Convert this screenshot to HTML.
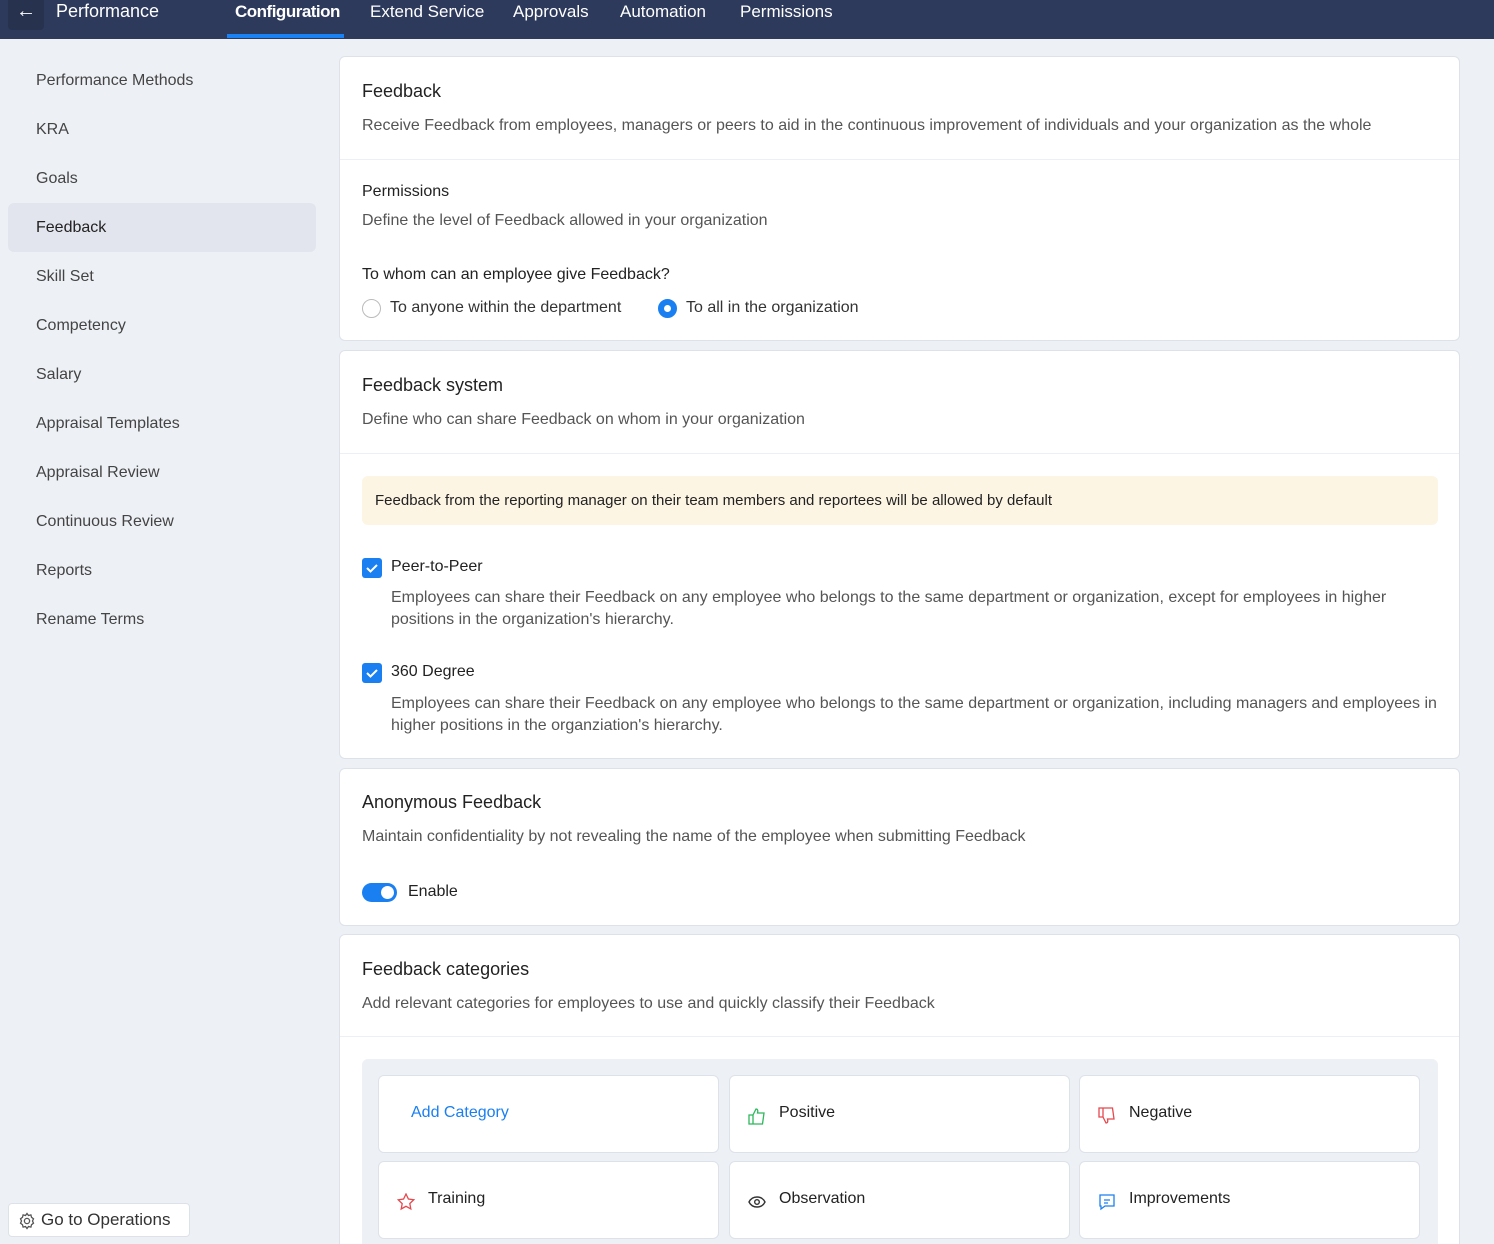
<!DOCTYPE html>
<html><head><meta charset="utf-8"><style>
*{box-sizing:border-box;margin:0;padding:0}
html{height:1244px;overflow:hidden}
body{width:1494px;height:1244px;overflow:hidden;background:#edf0f5;font-family:"Liberation Sans",sans-serif;color:#222;position:relative}
.top{position:absolute;left:0;top:0;width:1494px;height:39px;background:#2d3a5c;color:#fff}
.top .back{position:absolute;left:8px;top:-4px;width:36px;height:34px;background:#27324f;border-radius:4px;text-align:center;font-size:20px;line-height:30px}
.top span{position:absolute;top:2px;font-size:17px}
.side{position:absolute;left:8px;top:0}
.si{position:absolute;left:0;width:308px;height:49px;line-height:49px;padding-left:28px;font-size:16px;color:#444;border-radius:6px;white-space:nowrap}
.si.act{background:#e3e5ee;color:#222}
.card{position:absolute;left:339px;width:1121px;background:#fff;border:1px solid #dde2ea;border-radius:6px}
.abs{position:absolute;white-space:nowrap}
.h{font-size:18px;color:#222}
.d{font-size:16px;color:#555}
.hr{position:absolute;left:0;right:0;height:1px;background:#eceff3}
.cb{position:absolute;width:20px;height:20px;background:#1a7ff0;border-radius:3px}
.cat{position:absolute;width:341px;height:78px;background:#fff;border:1px solid #dde2ea;border-radius:6px;font-size:16px}
.cat .t{position:absolute;left:49px;top:28px}
.cat svg{position:absolute;left:18px;top:31px}
</style></head><body>
<div class="top">
<div class="back">←</div>
<span style="left:56px;font-size:18px;top:1px">Performance</span>
<span style="left:235px;font-weight:bold;letter-spacing:-0.5px">Configuration</span>
<div style="position:absolute;left:227px;top:34px;width:117px;height:4px;background:#1a82f5"></div>
<span style="left:370px">Extend Service</span>
<span style="left:513px">Approvals</span>
<span style="left:620px">Automation</span>
<span style="left:740px">Permissions</span>
</div>
<div class="side">
<div class="si" style="top:56px">Performance Methods</div>
<div class="si" style="top:105px">KRA</div>
<div class="si" style="top:154px">Goals</div>
<div class="si act" style="top:203px">Feedback</div>
<div class="si" style="top:252px">Skill Set</div>
<div class="si" style="top:301px">Competency</div>
<div class="si" style="top:350px">Salary</div>
<div class="si" style="top:399px">Appraisal Templates</div>
<div class="si" style="top:448px">Appraisal Review</div>
<div class="si" style="top:497px">Continuous Review</div>
<div class="si" style="top:546px">Reports</div>
<div class="si" style="top:595px">Rename Terms</div>
</div>
<div style="position:absolute;left:8px;top:1203px;width:182px;height:34px;background:#fff;border:1px solid #dde2ea;border-radius:4px;font-size:17px;line-height:32px;padding-left:32px;color:#333">Go to Operations
<svg style="position:absolute;left:9px;top:8px" width="18" height="18" viewBox="0 0 18 18" fill="none" stroke="#555" stroke-width="1.3"><circle cx="9" cy="9" r="2.6"/><path d="M9 1.5l1.5 2 2.4-.6.6 2.4 2 1.5-1 2.2 1 2.2-2 1.5-.6 2.4-2.4-.6L9 16.5l-1.5-2-2.4.6-.6-2.4-2-1.5 1-2.2-1-2.2 2-1.5.6-2.4 2.4.6z"/></svg></div>

<div class="card" style="top:56px;height:285px">
<div class="abs h" style="left:22px;top:24px">Feedback</div>
<div class="abs d" style="left:22px;top:60px">Receive Feedback from employees, managers or peers to aid in the continuous improvement of individuals and your organization as the whole</div>
<div class="hr" style="top:102px"></div>
<div class="abs" style="left:22px;top:126px;font-size:16px">Permissions</div>
<div class="abs d" style="left:22px;top:155px">Define the level of Feedback allowed in your organization</div>
<div class="abs" style="left:22px;top:209px;font-size:16px">To whom can an employee give Feedback?</div>
<div class="abs" style="left:22px;top:242px;width:19px;height:19px;border:1.5px solid #bbb;border-radius:50%"></div>
<div class="abs" style="left:50px;top:242px;font-size:16px;color:#333">To anyone within the department</div>
<div class="abs" style="left:318px;top:242px;width:19px;height:19px;border:6px solid #1a7ff0;border-radius:50%"></div>
<div class="abs" style="left:346px;top:242px;font-size:16px;color:#333">To all in the organization</div>
</div>

<div class="card" style="top:350px;height:409px">
<div class="abs h" style="left:22px;top:24px">Feedback system</div>
<div class="abs d" style="left:22px;top:60px">Define who can share Feedback on whom in your organization</div>
<div class="hr" style="top:102px"></div>
<div class="abs" style="left:22px;top:125px;width:1076px;height:49px;background:#fdf5e4;border-radius:6px;font-size:15px;line-height:49px;padding-left:13px;color:#222">Feedback from the reporting manager on their team members and reportees will be allowed by default</div>
<div class="cb" style="left:22px;top:207px"><svg width="20" height="20"><path d="M5 10l3.5 3.5L15 7" stroke="#fff" stroke-width="2" fill="none"/></svg></div>
<div class="abs" style="left:51px;top:207px;font-size:16px">Peer-to-Peer</div>
<div class="abs d" style="left:51px;top:236px;line-height:22px;white-space:normal;width:1050px">Employees can share their Feedback on any employee who belongs to the same department or organization, except for employees in higher positions in the organization's hierarchy.</div>
<div class="cb" style="left:22px;top:312px"><svg width="20" height="20"><path d="M5 10l3.5 3.5L15 7" stroke="#fff" stroke-width="2" fill="none"/></svg></div>
<div class="abs" style="left:51px;top:312px;font-size:16px">360 Degree</div>
<div class="abs d" style="left:51px;top:342px;line-height:22px;white-space:normal;width:1050px">Employees can share their Feedback on any employee who belongs to the same department or organization, including managers and employees in higher positions in the organziation's hierarchy.</div>
</div>

<div class="card" style="top:768px;height:158px">
<div class="abs h" style="left:22px;top:23px">Anonymous Feedback</div>
<div class="abs d" style="left:22px;top:59px">Maintain confidentiality by not revealing the name of the employee when submitting Feedback</div>
<div class="abs" style="left:22px;top:114px;width:35px;height:19px;background:#1a7ff0;border-radius:10px"><div style="position:absolute;right:3px;top:3px;width:13px;height:13px;background:#fff;border-radius:50%"></div></div>
<div class="abs" style="left:68px;top:114px;font-size:16px">Enable</div>
</div>

<div class="card" style="top:934px;height:320px">
<div class="abs h" style="left:22px;top:24px">Feedback categories</div>
<div class="abs d" style="left:22px;top:60px">Add relevant categories for employees to use and quickly classify their Feedback</div>
<div class="hr" style="top:101px"></div>
<div class="abs" style="left:22px;top:124px;width:1076px;height:190px;background:#edf0f5;border-radius:6px">
<div class="cat" style="left:16px;top:16px"><div class="t" style="left:32px;color:#1a7ff0">Add Category</div></div>
<div class="cat" style="left:367px;top:16px"><svg width="18" height="18" viewBox="0 0 18 18" fill="none" stroke="#2eb85c" stroke-width="1.3"><path d="M1 8h4v9H1zM5 8l3-6c2 0 2 2 1.5 4H16l-1.5 11H5"/></svg><div class="t">Positive</div></div>
<div class="cat" style="left:717px;top:16px"><svg width="18" height="18" viewBox="0 0 18 18" fill="none" stroke="#e5484d" stroke-width="1.3"><path d="M1 1h4v9H1zM5 10l3 6c2 0 2-2 1.5-4H16L14.5 1H5"/></svg><div class="t">Negative</div></div>
<div class="cat" style="left:16px;top:102px"><svg width="18" height="18" viewBox="0 0 18 18" fill="none" stroke="#e5484d" stroke-width="1.3"><path d="M9 1l2.4 5 5.4.7-4 3.8 1 5.4L9 13.3 4.2 16l1-5.4-4-3.8L6.6 6z"/></svg><div class="t">Training</div></div>
<div class="cat" style="left:367px;top:102px"><svg width="18" height="18" viewBox="0 0 18 18" fill="none" stroke="#333" stroke-width="1.4"><path d="M1 9c2-4 5-5 8-5s6 1 8 5c-2 4-5 5-8 5s-6-1-8-5z"/><circle cx="9" cy="9" r="2.3"/></svg><div class="t">Observation</div></div>
<div class="cat" style="left:717px;top:102px"><svg width="18" height="18" viewBox="0 0 18 18" fill="none" stroke="#1a7ff0" stroke-width="1.3"><path d="M2 2h14v11H7l-4 3v-3H2z"/><path d="M6 7h6M6 10h4"/></svg><div class="t">Improvements</div></div>
</div>
</div>
</body></html>
